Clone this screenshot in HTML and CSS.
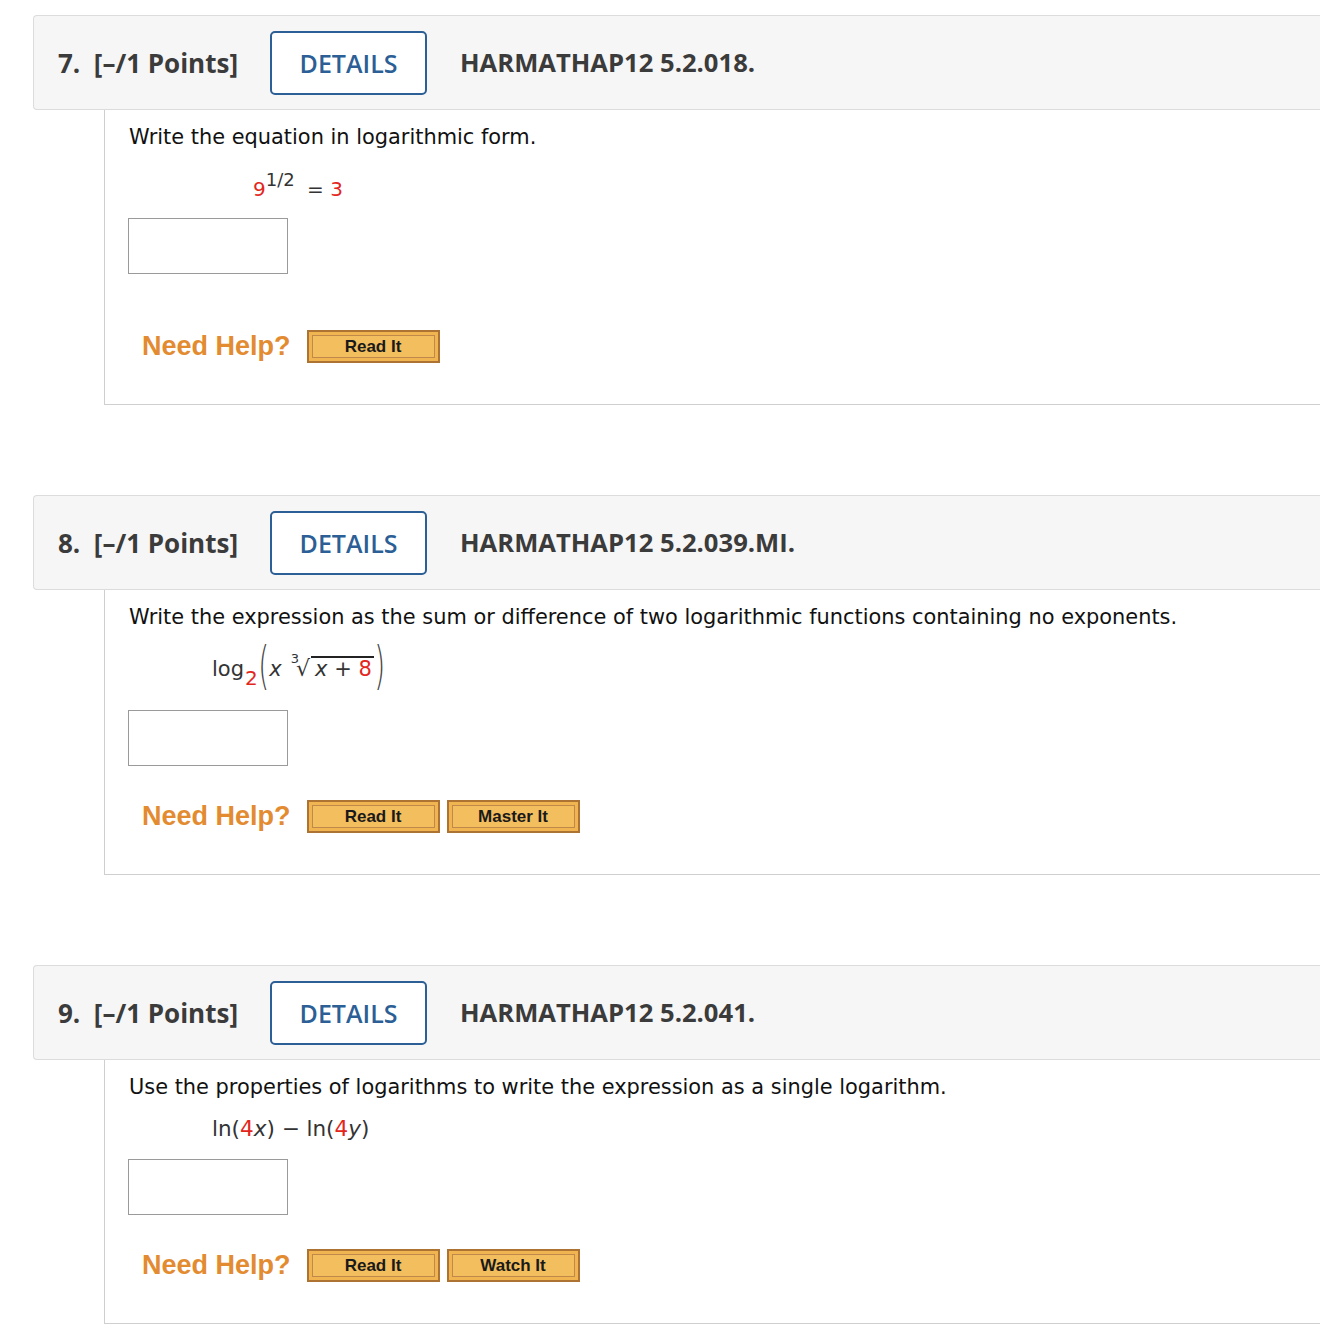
FILE: index.html
```html
<!DOCTYPE html>
<html>
<head>
<meta charset="utf-8">
<link rel="stylesheet" href="styles.css">
</head>
<body>
<div class="page">

  <div class="question">
    <div class="q-head">
      <span class="q-points">7.&nbsp; [–/1 Points]</span>
      <span class="details">DETAILS</span>
      <span class="q-code">HARMATHAP12 5.2.018.</span>
    </div>
    <div class="q-body">
      <p class="prompt">Write the equation in logarithmic form.</p>
      <div class="eq eq-7"><span class="red">9</span><span class="sup">1/2</span> = <span class="red">3</span></div>
      <div class="answer answer-7"></div>
      <div class="help help-7">
        <span class="need">Need Help?</span>
        <span class="hbtn"><span class="hbtn-in">Read It</span></span>
      </div>
    </div>
  </div>

  <div class="question">
    <div class="q-head">
      <span class="q-points">8.&nbsp; [–/1 Points]</span>
      <span class="details">DETAILS</span>
      <span class="q-code">HARMATHAP12 5.2.039.MI.</span>
    </div>
    <div class="q-body">
      <p class="prompt">Write the expression as the sum or difference of two logarithmic functions containing no exponents.</p>
      <div class="eq eq-8"><span class="dark">log</span><span class="sub red">2</span><span class="paren">(</span><i>x</i><span class="root"><span class="idx">3</span><span class="rad">√</span><span class="over"><i>x</i> + <span class="red">8</span></span></span><span class="paren">)</span></div>
      <div class="answer answer-8"></div>
      <div class="help">
        <span class="need">Need Help?</span>
        <span class="hbtn"><span class="hbtn-in">Read It</span></span>
        <span class="hbtn"><span class="hbtn-in">Master It</span></span>
      </div>
    </div>
  </div>

  <div class="question">
    <div class="q-head">
      <span class="q-points">9.&nbsp; [–/1 Points]</span>
      <span class="details">DETAILS</span>
      <span class="q-code">HARMATHAP12 5.2.041.</span>
    </div>
    <div class="q-body">
      <p class="prompt">Use the properties of logarithms to write the expression as a single logarithm.</p>
      <div class="eq eq-9"><span class="dark">ln(<span class="red">4</span><i>x</i>) − ln(<span class="red">4</span><i>y</i>)</span></div>
      <div class="answer answer-9"></div>
      <div class="help">
        <span class="need">Need Help?</span>
        <span class="hbtn"><span class="hbtn-in">Read It</span></span>
        <span class="hbtn"><span class="hbtn-in">Watch It</span></span>
      </div>
    </div>
  </div>

</div>
</body>
</html>
```

FILE: styles.css
```css
html, body {
  margin: 0;
  padding: 0;
  background: #ffffff;
}

.page {
  padding: 15px 0 0 33px;
  overflow: hidden;
}

.question {
  margin-bottom: 90px;
}

.q-head {
  display: flex;
  align-items: center;
  height: 93px;
  background: #f6f6f6;
  border: 1px solid #dcdcdc;
  border-right: none;
  border-radius: 4px 0 0 4px;
  padding-left: 24px;
  font-family: "Open Sans", "DejaVu Sans", sans-serif;
  font-weight: 700;
  font-size: 26px;
  color: #3b3b3b;
}

.details {
  box-sizing: border-box;
  display: flex;
  align-items: center;
  justify-content: center;
  width: 157px;
  height: 64px;
  margin-left: 32px;
  border: 2px solid #2c5f95;
  border-radius: 5px;
  background: #ffffff;
  color: #2c5f95;
  font-weight: 600;
  font-size: 25px;
}

.q-code {
  margin-left: 33px;
  font-size: 25.6px;
}

.q-body {
  margin-left: 71px;
  border-left: 1px solid #cfcfcf;
  border-bottom: 1px solid #cfcfcf;
  padding: 13px 0 41px 24px;
  font-family: "DejaVu Sans", Verdana, sans-serif;
  font-size: 20.9px;
  color: #111;
}

.prompt {
  margin: 0;
  line-height: 28px;
}

.eq {
  margin-top: 14px;
  height: 28px;
  line-height: 28px;
  white-space: nowrap;
}

.eq-7 {
  margin-top: 24px;
  margin-left: 124px;
  color: #333;
  font-size: 20px;
}

.eq-8 {
  margin-top: 20px;
  margin-left: 83px;
  color: #333;
  font-size: 21px;
}

.eq-9 {
  margin-left: 83px;
  color: #333;
  font-size: 21.5px;
}

.red {
  color: #e3261c;
}

.dark {
  color: #333;
}

.sup {
  position: relative;
  top: -10px;
  font-size: 18px;
  margin-right: 6px;
}

.sub {
  position: relative;
  top: 9px;
  font-size: 20px;
  margin-left: 1px;
}

.paren {
  display: inline-block;
  font-size: 40px;
  line-height: 28px;
  transform: scale(0.7, 1.3);
  font-weight: 300;
  color: #444;
  vertical-align: -3px;
  margin: 0 -2px;
}

.root {
  margin-left: 9px;
}

.idx {
  position: relative;
  top: -13px;
  font-size: 13px;
  margin-right: -3px;
}

.rad {
  font-size: 22px;
}

.over {
  display: inline-block;
  border-top: 2px solid #222;
  line-height: 22px;
  padding: 0 2px 0 4px;
  margin-left: 1px;
}

.answer {
  box-sizing: border-box;
  width: 160px;
  height: 56px;
  margin-left: -1px;
  border: 1px solid #9a9a9a;
  background: #fff;
}

.answer-7 { margin-top: 15px; }
.answer-8 { margin-top: 31px; }
.answer-9 { margin-top: 16px; }

.help {
  display: flex;
  align-items: center;
  margin-top: 34px;
  margin-left: 13px;
}

.help-7 {
  margin-top: 56px;
}

.need {
  font-family: "Liberation Sans", Arial, sans-serif;
  font-weight: 700;
  font-size: 27px;
  color: #e38b31;
  margin-right: 16px;
  line-height: 33px;
}

.hbtn {
  box-sizing: border-box;
  display: flex;
  width: 133px;
  height: 33px;
  padding: 3px;
  margin-right: 7px;
  background: #f0b550;
  border: 2px solid #ad7332;
}

.hbtn-in {
  flex: 1;
  display: flex;
  align-items: center;
  justify-content: center;
  border: 1px solid #c0884a;
  background: #f3be5e;
  font-family: "Liberation Sans", Arial, sans-serif;
  font-weight: 700;
  font-size: 17px;
  color: #1a1a1a;
}
```
